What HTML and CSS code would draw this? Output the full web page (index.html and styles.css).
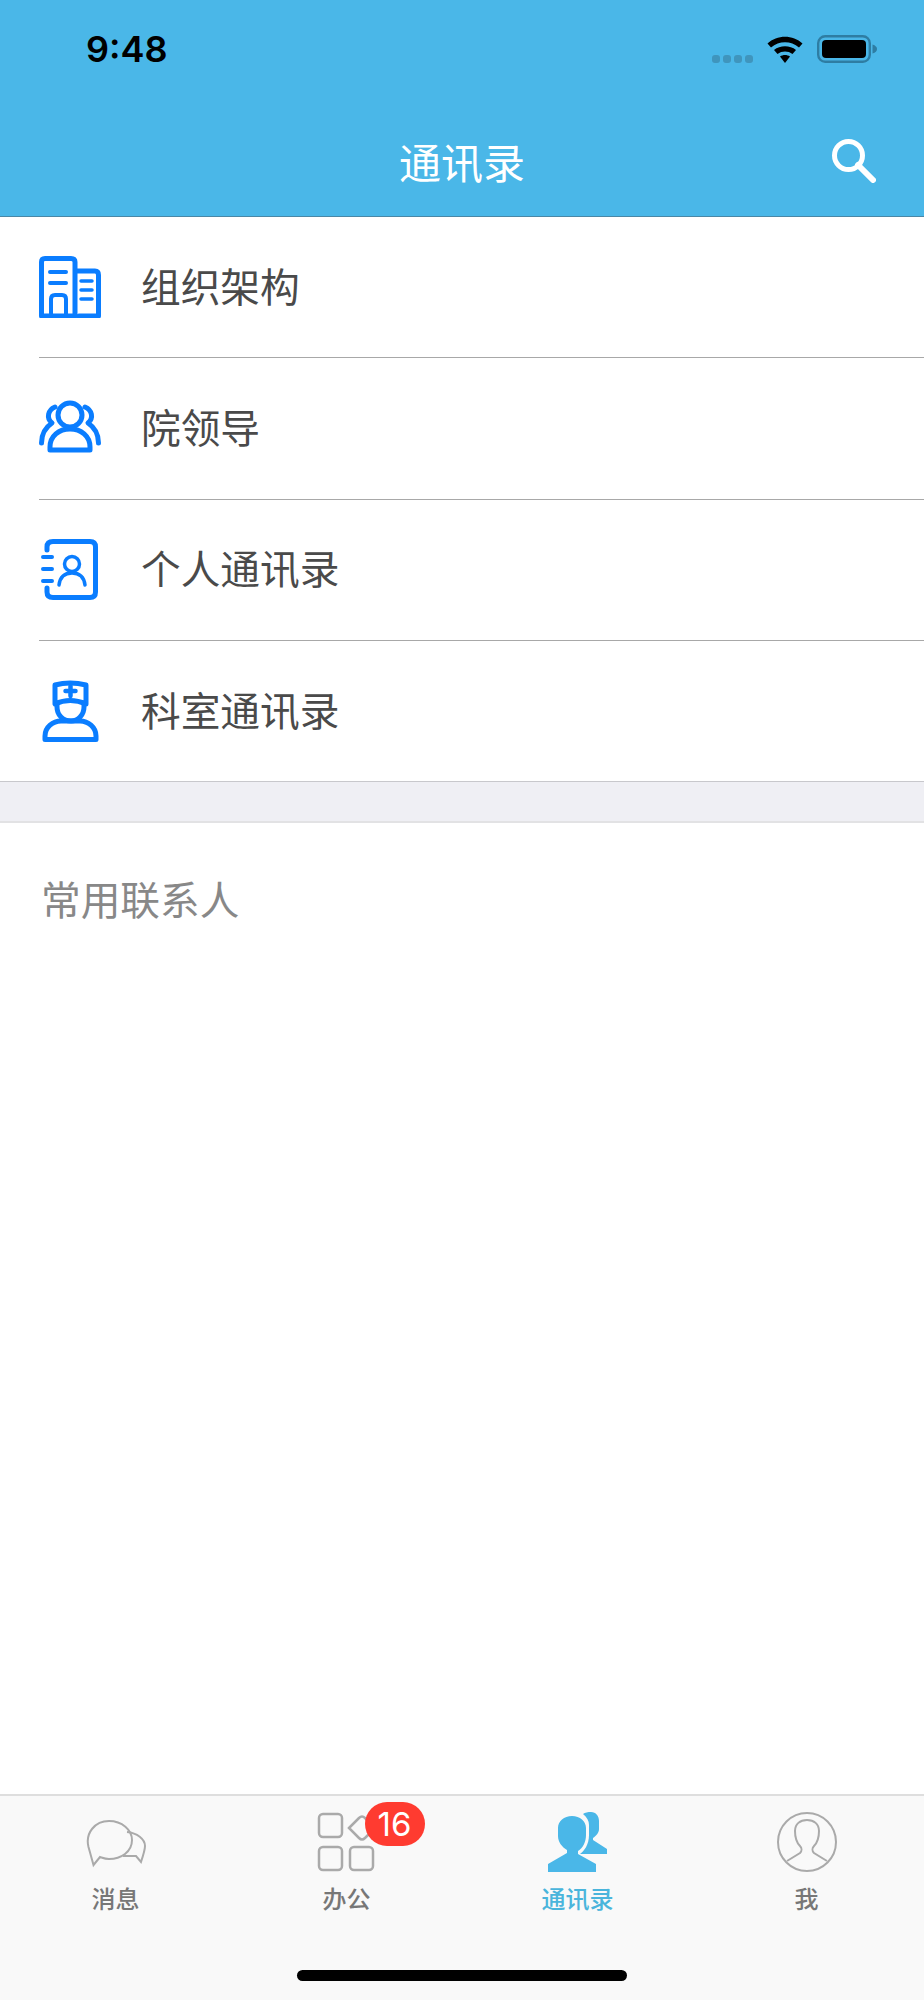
FILE: index.html
```html
<!DOCTYPE html>
<html>
<head lang="en">
    <meta charset="UTF-8">
    <title>通讯录</title>
    <link rel="stylesheet" href="styles.css">
</head>
<body>
    <div id="page">
        <div id="header">
            <div id="status">
                <span id="time">9:48</span>
                <div id="status-icons">
                    <div id="dots"><i></i><i></i><i></i><i></i></div>
                    <svg width="38" height="28" viewBox="0 0 38 28">
                        <path d="M1.5 8.5C11 -0.5 27 -0.5 36.5 8.5L33 12.5C25 5.5 13 5.5 5 12.5Z"/>
                        <path d="M8 15C14 10 24 10 30 15L26.5 19C22 15.7 16 15.7 11.5 19Z"/>
                        <path d="M14 21.5C17 19.5 21 19.5 24 21.5L19 28Z"/>
                    </svg>
                    <svg width="60" height="28" viewBox="0 0 60 28">
                        <rect x="1.2" y="1.2" width="51.6" height="25.6" rx="7" fill="none" stroke="#2e7da3" stroke-width="2.4"/>
                        <rect x="5" y="5" width="44" height="18" rx="4"/>
                        <path d="M55.5 9.5C58.5 10.5 60 12 60 14C60 16 58.5 17.5 55.5 18.5Z" fill="#2e7da3"/>
                    </svg>
                </div>
            </div>
            <div id="nav">
                <span></span>
                <div id="title">通讯录</div>
                <svg id="search" width="44" height="44" viewBox="0 0 44 44" fill="none" stroke="#fff">
                    <circle cx="16.500" cy="16.500" r="14" stroke-width="5"/>
                    <path d="M26 26L41 41" stroke-width="6"/>
                </svg>
            </div>
        </div>

        <div id="main">
            <ul id="menu">
                <li>
                    <svg class="ico" width="62" height="62" viewBox="0 0 62 62">
                        <path d="M2.500 60V6Q2.500 2.500 6 2.500H32Q36 2.500 36 6V60Z"/>
                        <path d="M38 15H56Q59.500 15 59.500 19V60H40"/>
                        <path d="M11 16H27M11 27H27M12 60V43Q12 39 16 39H23Q27 39 27 43V60" stroke-width="4"/>
                        <path d="M42 25H53M42 34H53M42 43H53" stroke-width="3.500"/>
                    </svg>
                    <span>组织架构</span>
                </li>
                <li>
                    <svg class="ico" width="62" height="62" viewBox="0 0 62 62">
                        <circle cx="31" cy="18" r="12"/>
                        <path d="M11 53V50C11 39 20 32 31 32C42 32 51 39 51 50V53Z"/>
                        <path d="M16 10C9 13 7 21 13 26C7 30 2.500 37 2.500 46"/>
                        <path d="M46 10C53 13 55 21 49 26C55 30 59.500 37 59.500 46"/>
                    </svg>
                    <span>院领导</span>
                </li>
                <li>
                    <svg class="ico" width="62" height="62" viewBox="0 0 62 62">
                        <path d="M8 11V8Q8 2.500 14 2.500H51Q56.500 2.500 56.500 8V53Q56.500 58.500 51 58.500H14Q8 58.500 8 53V49"/>
                        <path d="M4 18H13M4 30H13M4 42H13" stroke-width="4"/>
                        <circle cx="33" cy="25" r="7.500" stroke-width="3.500"/>
                        <path d="M20 46C21 38 26 34 33 34C40 34 45 38 46 46" stroke-width="3.500"/>
                    </svg>
                    <span>个人通讯录</span>
                </li>
                <li>
                    <svg class="ico" width="62" height="62" viewBox="0 0 62 62">
                        <path d="M16 5Q31 1 47 5V24Q31 17 16 24Z"/>
                        <path d="M18 24V27C18 35 24 41 32 41C39 41 45 35 45 27V24"/>
                        <path d="M6 59.500V56C6 47 14 41 22 41H41C49 41 57 47 57 56V59.500Z"/>
                        <path d="M31.500 6V16M26.500 11H36.500" stroke-width="4.500"/>
                    </svg>
                    <span>科室通讯录</span>
                </li>
            </ul>
            <div id="gap"></div>
            <div id="recent">常用联系人</div>
        </div>

        <div id="tabbar">
            <div id="tabs">
                <div class="tab">
                    <svg class="tab-ico chat" width="62" height="60" viewBox="0 -7 62 60" fill="none" stroke="#aaa" stroke-width="2">
                        <path d="M8.500 46L3.500 28C0 14 10 2 24 2C37 2 47 11 47 21C47 33 36 40 24 40C20 40 18 39 15 38Z"/>
                        <path d="M42 13C52 14 60 20 60 27C60 31 58 37 56 43L51 37C47 37 42 37 38 37"/>
                    </svg>
                    <span>消息</span>
                </div>
                <div class="tab">
                    <div class="tab-ico-wrap">
                        <svg class="tab-ico" width="60" height="60" viewBox="0 0 60 60" fill="none" stroke="#aaa" stroke-width="2.500">
                            <rect x="3" y="2" width="23" height="23" rx="4"/>
                            <rect x="3" y="35" width="23" height="23" rx="4"/>
                            <rect x="34" y="35" width="23" height="23" rx="4"/>
                            <path d="M33 16L43 6Q46 3 49 6L56 13Q59 16 56 19L49 26Q46 29 43 26L33 16Z"/>
                        </svg>
                        <span id="badge">16</span>
                    </div>
                    <span>办公</span>
                </div>
                <div class="tab on">
                    <svg class="tab-ico" width="60" height="60" viewBox="0 0 60 60" fill="#4ab7e8">
                        <path d="M25 4C17 4 11 9 11 16V24C11 30 15 35 20 38V41L1 52V60H49V52L31 42V39C36 36 39 30 39 23V16C39 9 33 4 25 4Z"/>
                        <path d="M36 2C38 0.500 41 0 44 0C49 0 52 4 52 9V17C52 21 49 24 46 26V28L60 37V42H33C37 39 42 33 42 23V13C42 9 40 5 36 2Z"/>
                    </svg>
                    <span>通讯录</span>
                </div>
                <div class="tab me">
                    <svg class="tab-ico" width="60" height="60" viewBox="0 0 60 60" fill="none" stroke="#aaa" stroke-width="2">
                        <circle cx="30" cy="30" r="29"/>
                        <path d="M10 49L23 41C25 39 25 36 23 34C19 30 18 25 18 19C18 12 23 8 30 8C37 8 42 12 42 19C42 25 41 30 37 34C35 36 35 39 37 41L50 49"/>
                    </svg>
                    <span>我</span>
                </div>
            </div>
            <div id="home-bar"></div>
        </div>
    </div>
</body>
</html>
```

FILE: styles.css
```css
*{
    padding: 0;
    margin: 0;
}
ul{
    list-style: none;
}
body{
    background: #fff;
    font-family: "Noto Sans CJK SC", "Liberation Sans", sans-serif;
}
#page{
    width: 924px;
    height: 2000px;
    display: flex;
    flex-direction: column;
}
#header{
    height: 216px;
    background: #4ab7e8;
    border-bottom: 1px solid #4a87a6;
    flex: none;
}
#status{
    height: 98px;
    padding: 35px 47px 0 86px;
    box-sizing: border-box;
    display: flex;
    justify-content: space-between;
    align-items: flex-start;
}
#time{
    font-family: Inter, "Liberation Sans", sans-serif;
    font-size: 36px;
    font-weight: 600;
    line-height: 28px;
    color: #000;
}
#status-icons{
    display: flex;
    align-items: flex-start;
    gap: 13px;
}
#dots{
    display: flex;
    gap: 3px;
    margin-top: 20px;
}
#dots i{
    width: 8px;
    height: 8px;
    border-radius: 3px;
    background: #3f95bd;
}
#nav{
    height: 118px;
    padding: 0 48px;
    display: grid;
    grid-template-columns: 1fr auto 1fr;
    align-items: center;
}
#title{
    width: 132px;
    margin-top: 8px;
    text-align: center;
    font-size: 42px;
    line-height: 60px;
    color: #fff;
}
#search{
    justify-self: end;
    stroke-linecap: round;
    margin-top: 7px;
}
#main{
    flex: 1;
}
#menu li{
    height: 140.33px;
    margin-left: 39px;
    border-bottom: 1px solid #a8a8a8;
    display: flex;
    align-items: center;
    gap: 40px;
    font-size: 39.7px;
    color: #4a4a4a;
}
#menu li span{
    padding-bottom: 6px;
}
#menu li:last-child{
    margin-left: 0;
    padding-left: 39px;
    border-bottom: 1px solid #c8c8cc;
}
.ico{
    fill: none;
    stroke: #0a7dff;
    stroke-width: 5;
    stroke-linejoin: round;
    stroke-linecap: round;
    flex: none;
}
#gap{
    height: 39px;
    background: #efeff4;
    border-bottom: 2px solid #e2e2e4;
}
#recent{
    height: 150px;
    line-height: 150px;
    padding-left: 41px;
    font-size: 39.7px;
    color: #888;
}
#tabbar{
    height: 206px;
    flex: none;
    background: #f9f9f9;
    border-top: 2px solid #dedede;
    box-sizing: border-box;
    display: flex;
    flex-direction: column;
    align-items: center;
}
#tabs{
    width: 100%;
    display: flex;
    padding-top: 16px;
}
.tab{
    flex: 0 0 25%;
    box-sizing: border-box;
    display: flex;
    flex-direction: column;
    align-items: center;
    font-size: 24px;
    font-weight: 500;
    line-height: 36px;
    color: #777;
}
.tab-ico{
    display: block;
    margin-right: 2px;
    margin-bottom: 8px;
}
.chat{
    margin-right: 0;
}
.tab-ico-wrap{
    position: relative;
}
.on{
    color: #4ab5dc;
}
.me{
    padding-right: 4px;
}
.me .tab-ico{
    margin-right: 0;
}
#badge{
    position: absolute;
    left: 49px;
    top: -10px;
    width: 60px;
    height: 44px;
    border-radius: 22px;
    background: #ff3b30;
    color: #fff;
    font-family: Inter, "Liberation Sans", sans-serif;
    font-size: 33px;
    font-weight: 400;
    line-height: 44px;
    text-align: center;
}
#home-bar{
    width: 330px;
    height: 11px;
    border-radius: 6px;
    background: #000;
    margin-top: 54px;
}
```
